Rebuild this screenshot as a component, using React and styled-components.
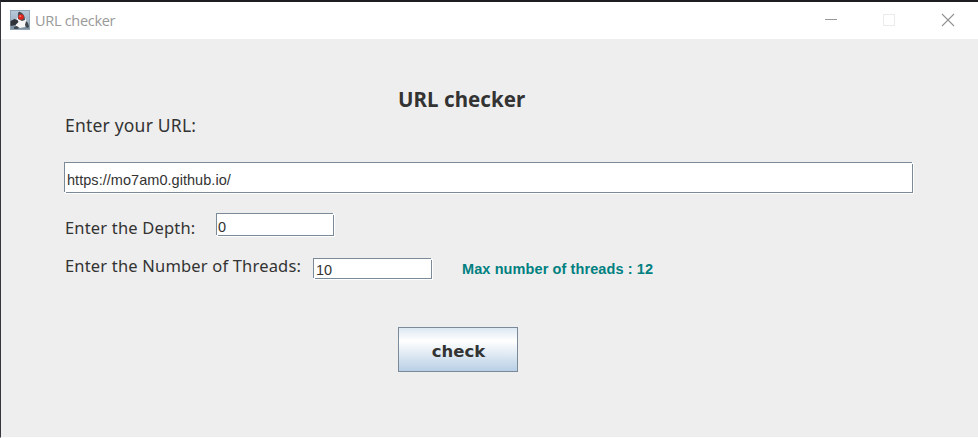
import React from "react";
import styled, { createGlobalStyle } from "styled-components";

const Global = createGlobalStyle`
  * { box-sizing: border-box; }
  body { margin: 0; background: #ededed; overflow: hidden; }
`;

const Window = styled.div`
  width: 978px;
  height: 438px;
  display: flex;
  flex-direction: column;
  background: #eeeeee;
  border-top: 2px solid #1e1e22;
  border-left: 1px solid #36363c;
  border-bottom: 1px solid #fdfdfd;
  color: #333333;
`;

const TitleBar = styled.header`
  height: 37px;
  flex: none;
  display: flex;
  align-items: center;
  padding: 0 1px 1px 9px;
  background: #ffffff;
`;

const WindowTitle = styled.span`
  flex: 1;
  margin-left: 5px;
  padding-top: 1px;
  font: 14.5px/20px "Open Sans", "Noto Sans", sans-serif;
  letter-spacing: -0.3px;
  color: #999999;
`;

const Controls = styled.div`
  display: flex;
  align-self: flex-start;
`;

const ControlIcon = styled.svg`
  width: 58.5px;
  height: 36px;
  display: block;
`;

const Content = styled.main`
  flex: 1;
  display: flex;
  flex-direction: column;
  align-items: flex-start;
  padding: 47px 0 0 63px;
`;

const Heading = styled.h1`
  margin: 0 0 0 334px;
  font: bold 20.5px/26px "Noto Sans", "Open Sans", sans-serif;
  letter-spacing: 0.07px;
  white-space: nowrap;
`;

const Label = styled.label`
  flex: none;
  width: ${(p) => p.$width || "auto"};
  padding: ${(p) => p.$pad || "0"} 0 0 1px;
  font: ${(p) => p.$size || "16.5px"}/24px "Noto Sans", sans-serif;
  letter-spacing: ${(p) => p.$spacing || "0.18px"};
  white-space: nowrap;
`;

const Row = styled.div`
  display: flex;
  align-items: flex-start;
  height: ${(p) => p.$height};
  margin-top: ${(p) => p.$gap || "0"};
`;

const FieldFrame = styled.div`
  position: relative;
  flex: none;
  display: flex;
  width: ${(p) => p.$width};
  height: ${(p) => p.$height};
  margin-top: ${(p) => p.$gap || "0"};
  box-shadow: 1px 1px 0 #ffffff;

  &::before,
  &::after {
    content: "";
    position: absolute;
    width: 2px;
    height: 1px;
    background: #f8f8f8;
  }
  &::before { left: 0; bottom: 0; }
  &::after { right: 0; top: 0; width: 1px; height: 2px; }
`;

const Input = styled.input`
  width: 100%;
  height: 100%;
  padding: ${(p) => p.$pad || "3px"} 2px 0 ${(p) => p.$indent || "2px"};
  border: 1px solid #7a8a99;
  border-radius: 0;
  outline: none;
  background: #ffffff;
  color: #333333;
  font: 14.5px "Liberation Sans", Arial, sans-serif;
  letter-spacing: 0.04px;
`;

const Hint = styled.strong`
  margin: 7px 0 0 30px;
  font: bold 14.5px/18px "Liberation Sans", Arial, sans-serif;
  letter-spacing: 0.1px;
  color: #008080;
  white-space: nowrap;
`;

const CheckButton = styled.button`
  width: 120px;
  height: 45px;
  margin: 40px 0 0 334px;
  padding: 3px 0 0 1px;
  border: 1px solid #7a8a99;
  border-radius: 0;
  background: linear-gradient(#dde8f3 0%, #ffffff 30%, #b8cfe5 100%);
  color: #333333;
  font: bold 16.5px "DejaVu Sans", sans-serif;
  letter-spacing: 0;
`;

function JavaIcon() {
  return (
    <svg width="20" height="20" viewBox="0 0 20 20">
      <defs>
        <linearGradient id="sky" x1="0" y1="0" x2="0" y2="1">
          <stop offset="0" stopColor="#b9cad9" />
          <stop offset="1" stopColor="#8da6ba" />
        </linearGradient>
      </defs>
      <rect x=".5" y=".5" width="19" height="19" fill="url(#sky)" stroke="#8fa5b6" />
      <path d="M1 19v-4l5-2h9l4 2v4z" fill="#7f91a2" />
      <path d="M7 8l6-1c3 1 4 4 3 7l-1 3-5 1-4-2-1-3z" fill="#f6f6f6" />
      <path d="M8 6c0-3 0-5 2-4 3 1 5 4 5 8l-3 1-4-2z" fill="#474950" />
      <path d="M0.5 11l4-2 3 1 1 2-3 3-5 1z" fill="#30343a" />
      <path d="M16 11l2 2 1 4-2 1-2-3zM4 17l3-1 2 2-2 1H4z" fill="#40474f" />
      <circle cx="11" cy="7" r="2.8" fill="#df241c" />
      <circle cx="10.3" cy="6.2" r=".9" fill="#ff7464" />
    </svg>
  );
}

function Field({ id, value, width, height, gap, pad, indent }) {
  return (
    <FieldFrame $width={width} $height={height} $gap={gap}>
      <Input id={id} defaultValue={value} $pad={pad} $indent={indent} />
    </FieldFrame>
  );
}

export default function App() {
  return (
    <>
      <Global />
      <Window>
        <TitleBar>
          <JavaIcon />
          <WindowTitle>URL checker</WindowTitle>
          <Controls>
            <ControlIcon viewBox="0 0 58.5 36" shapeRendering="crispEdges">
              <path d="M22.5 17.5h12" stroke="#999999" />
            </ControlIcon>
            <ControlIcon viewBox="0 0 58.5 36" shapeRendering="crispEdges">
              <path d="M23 12.5h11v11h-11z" fill="none" stroke="#ebebeb" />
            </ControlIcon>
            <ControlIcon viewBox="0 0 58.5 36">
              <path d="M23 12l12 12M35 12l-12 12" stroke="#929292" strokeWidth="1.1" />
            </ControlIcon>
          </Controls>
        </TitleBar>
        <Content>
          <Heading>URL checker</Heading>
          <Label htmlFor="url" $size="17.5px" $pad="1px" $spacing="0.2px">Enter your URL:</Label>
          <Field id="url" width="849px" height="31px" gap="25px" pad="4px" value="https://mo7am0.github.io/" />
          <Row $gap="20px" $height="40px">
            <Label htmlFor="depth" $width="152px" $pad="3px">Enter the Depth:</Label>
            <Field id="depth" width="118px" height="23px" indent="1px" pad="4px" value="0" />
          </Row>
          <Row $height="34px">
            <Label htmlFor="threads" $width="249px" $pad="1px">Enter the Number of Threads:</Label>
            <Field id="threads" width="119px" height="21px" gap="5px" pad="3px" value="10" />
            <Hint>Max number of threads : 12</Hint>
          </Row>
          <CheckButton>check</CheckButton>
        </Content>
      </Window>
    </>
  );
}
